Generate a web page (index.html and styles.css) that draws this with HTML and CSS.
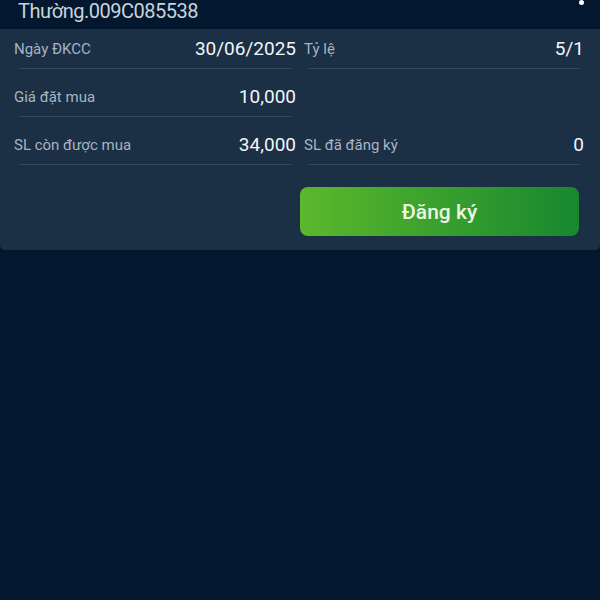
FILE: index.html
```html
<!DOCTYPE html>
<html lang="vi">
<head>
  <meta charset="UTF-8">
  <title>Đăng ký quyền mua</title>
  <link rel="stylesheet" href="styles.css">
</head>
<body>

  <div class="header">
    <span class="account">Thường.009C085538</span>
    <span class="dot"></span>
  </div>

  <div class="card">
    <div class="grid">
      <div class="cell">
        <span class="label">Ngày ĐKCC</span>
        <span class="value">30/06/2025</span>
      </div>
      <div class="cell">
        <span class="label">Tỷ lệ</span>
        <span class="value">5/1</span>
      </div>

      <div class="cell">
        <span class="label">Giá đặt mua</span>
        <span class="value">10,000</span>
      </div>
      <div class="cell empty"></div>

      <div class="cell">
        <span class="label">SL còn được mua</span>
        <span class="value">34,000</span>
      </div>
      <div class="cell">
        <span class="label">SL đã đăng ký</span>
        <span class="value">0</span>
      </div>

      <div class="cell empty"></div>
      <div class="action">
        <button type="button" class="btn-register">Đăng ký</button>
      </div>
    </div>
  </div>

</body>
</html>
```

FILE: styles.css
```css
body {
  margin: 0;
  background: #03182f;
  font-family: Roboto, "Noto Sans", sans-serif;
  color: #eef2f6;
}

.header {
  height: 29px;
  display: flex;
  align-items: flex-start;
  justify-content: space-between;
  padding: 0 16px 0 18px;
  overflow: hidden;
}
.account {
  font-size: 20px;
  line-height: 24px;
  letter-spacing: -0.5px;
  margin-top: -1px;
  color: #c9d3de;
}
.dot {
  width: 5px;
  height: 5px;
  border-radius: 50%;
  background: #ffffff;
}

.card {
  background: #1b2f45;
  border-radius: 0 0 5px 5px;
  padding: 0 16px 14px 14px;
}
.grid {
  display: grid;
  grid-template-columns: 282px 280px;
  column-gap: 8px;
}
.cell {
  height: 48px;
  display: flex;
  align-items: center;
  justify-content: space-between;
  position: relative;
}
.cell::after {
  content: "";
  position: absolute;
  left: 5px;
  right: 5px;
  bottom: 8px;
  height: 1px;
  background: #324860;
}
.cell.empty::after {
  display: none;
}
.label {
  font-size: 15px;
  color: #a8b4c2;
  margin-top: -9px;
}
.value {
  font-size: 19px;
  color: #f2f5f8;
  margin-top: -10px;
}

.action {
  padding-top: 14px;
  display: flex;
  justify-content: flex-end;
  margin-right: 5px;
}
.btn-register {
  flex-shrink: 0;
  width: 279px;
  height: 49px;
  border: none;
  border-radius: 8px;
  background: linear-gradient(90deg, #5cb82c, #17882f);
  color: #eaf6e2;
  font-family: Roboto, sans-serif;
  font-size: 21px;
  font-weight: 500;
  cursor: pointer;
}
```
